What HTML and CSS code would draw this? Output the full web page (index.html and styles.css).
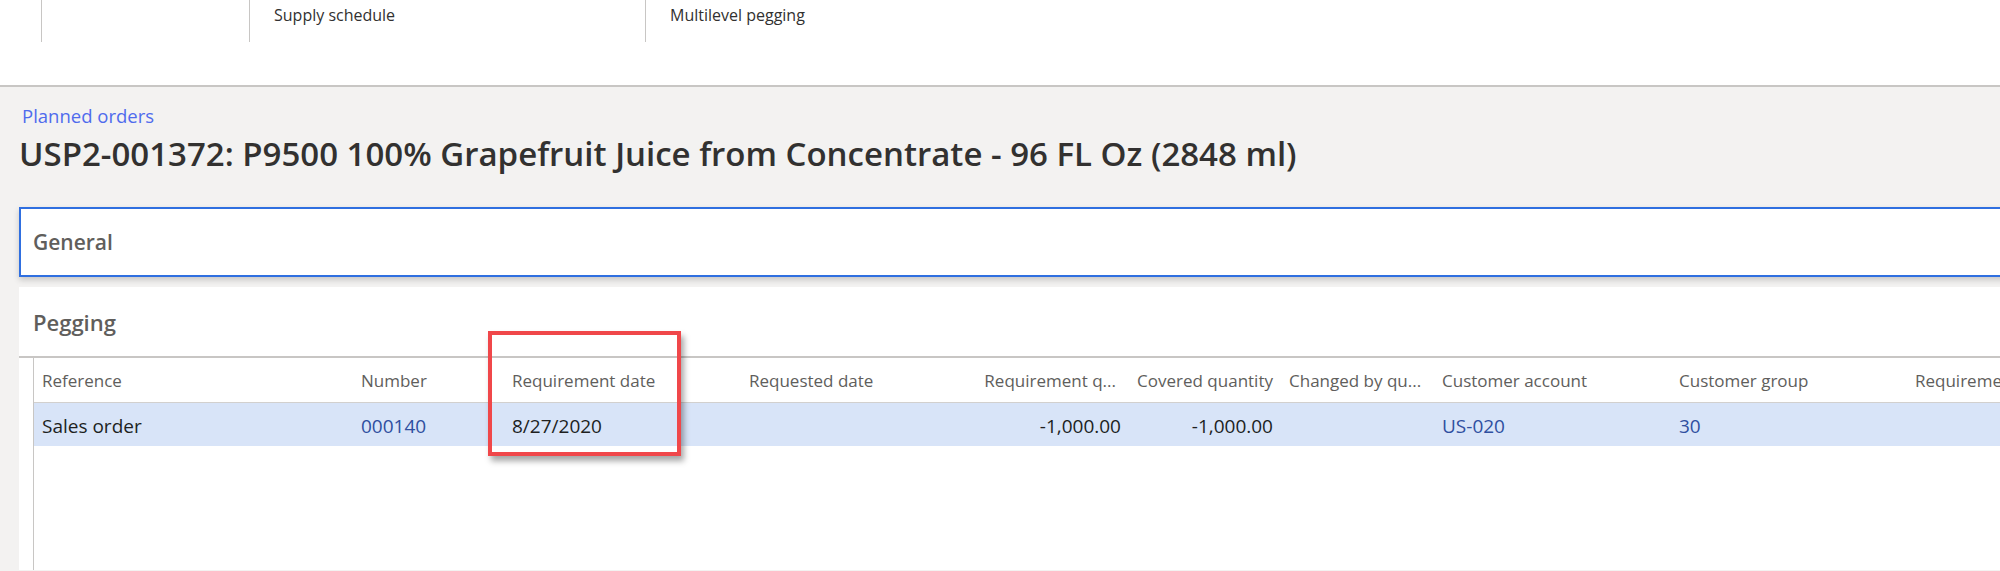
FILE: index.html
```html
<!DOCTYPE html>
<html lang="en">
<head>
    <meta charset="UTF-8">
    <title>Planned orders - Pegging</title>
    <link rel="stylesheet" href="styles.css">
</head>
<body>

    <!-- Onglets du haut -->
    <div class="topbar">
        <div class="tabs">
            <div class="tab tab-wide"></div>
            <div class="tab tab-supply">Supply schedule</div>
            <div class="tab">Multilevel pegging</div>
        </div>
    </div>

    <div class="content">
        <a class="breadcrumb" href="#">Planned orders</a>
        <h1 class="title">USP2-001372: P9500 100% Grapefruit Juice from Concentrate - 96 FL Oz (2848 ml)</h1>

        <div class="section section-general">
            <h2>General</h2>
        </div>

        <div class="section section-pegging">
            <h2>Pegging</h2>

            <div class="grid">
                <div class="grid-inner">
                    <table class="pegging-table">
                        <colgroup>
                            <col style="width:319px">
                            <col style="width:151px">
                            <col style="width:237px">
                            <col style="width:234px">
                            <col style="width:154px">
                            <col style="width:152px">
                            <col style="width:153px">
                            <col style="width:237px">
                            <col style="width:236px">
                            <col style="width:160px">
                        </colgroup>
                        <thead>
                            <tr>
                                <th>Reference</th>
                                <th>Number</th>
                                <th>Requirement date</th>
                                <th>Requested date</th>
                                <th class="num cut">Requirement q...</th>
                                <th class="num">Covered quantity</th>
                                <th>Changed by qu...</th>
                                <th>Customer account</th>
                                <th>Customer group</th>
                                <th>Requirement</th>
                            </tr>
                        </thead>
                        <tbody>
                            <tr class="selected">
                                <td>Sales order</td>
                                <td><a href="#">000140</a></td>
                                <td>8/27/2020</td>
                                <td></td>
                                <td class="num">-1,000.00</td>
                                <td class="num">-1,000.00</td>
                                <td></td>
                                <td><a href="#">US-020</a></td>
                                <td><a href="#">30</a></td>
                                <td></td>
                            </tr>
                        </tbody>
                    </table>
                </div>

                <!-- encadré rouge sur la date -->
                <div class="highlight"></div>
            </div>
        </div>
    </div>

</body>
</html>
```

FILE: styles.css
```css
html, body {
    margin: 0;
    height: 571px;
    overflow: hidden;
}

body {
    font-family: 'Open Sans', 'Noto Sans', sans-serif;
    font-size: 16px;
    color: #201f1e;
    background-color: #f3f2f1;
}

/* barre du haut */
.topbar {
    height: 85px;
    background-color: #fff;
    border-bottom: 2px solid #c8c6c4;
}

.tabs {
    display: flex;
    padding-left: 41px;
}

.tab {
    height: 42px;
    border-left: 1px solid #c8c6c4;
    padding: 5px 0 0 24px;
    box-sizing: border-box;
    line-height: 20px;
    color: #323130;
}

.tab-wide {
    width: 208px;
}

.tab-supply {
    width: 396px;
}

/* contenu */
.content {
    padding-left: 19px;
    margin-right: -20px;
}

.breadcrumb {
    display: block;
    margin: 18px 0 0 3px;
    font-size: 18.5px;
    line-height: 22px;
    color: #4f6bed;
    text-decoration: none;
}

.title {
    margin: 5px 0 0 0;
    font-size: 33px;
    font-weight: 600;
    line-height: 44px;
    color: #323130;
}

.section {
    background-color: #fff;
}

.section h2 {
    margin: 0;
    font-size: 21px;
    font-weight: 600;
    color: #605e5c;
}

.section-general {
    margin-top: 31px;
    height: 70px;
    box-sizing: border-box;
    border: 2px solid #2f6fe0;
    padding-left: 12px;
    display: flex;
    align-items: center;
    box-shadow: 0 3px 6px rgba(0, 0, 0, 0.18);
}

.section-pegging {
    margin-top: 10px;
}

.section-pegging h2 {
    height: 69px;
    padding-left: 14px;
    font-size: 22px;
    display: flex;
    align-items: center;
}

.grid {
    position: relative;
    border-top: 2px solid #c8c6c4;
    padding-left: 14px;
}

.grid-inner {
    height: 212px;
    border-left: 1px solid #c8c6c4;
    overflow: hidden;
}

.pegging-table {
    table-layout: fixed;
    border-collapse: collapse;
    width: 2033px;
}

.pegging-table th,
.pegging-table td {
    padding: 0 8px;
    text-align: left;
    white-space: nowrap;
    overflow: hidden;
}

.pegging-table th {
    height: 44px;
    font-size: 17px;
    font-weight: normal;
    color: #605e5c;
    border-bottom: 1px solid #d2d0ce;
}

.pegging-table td {
    height: 43px;
    padding-top: 3px;
    box-sizing: border-box;
    font-size: 19px;
}

.pegging-table .num {
    text-align: right;
}

.pegging-table th.cut {
    padding-right: 13px;
}

.pegging-table a {
    color: #2f4fa0;
    text-decoration: none;
}

tr.selected {
    background-color: #d8e4f8;
}

.highlight {
    position: absolute;
    left: 469px;
    top: -27px;
    width: 193px;
    height: 125px;
    box-sizing: border-box;
    border: 4px solid #f0474a;
    box-shadow: 3px 5px 6px rgba(0, 0, 0, 0.35);
}
```
